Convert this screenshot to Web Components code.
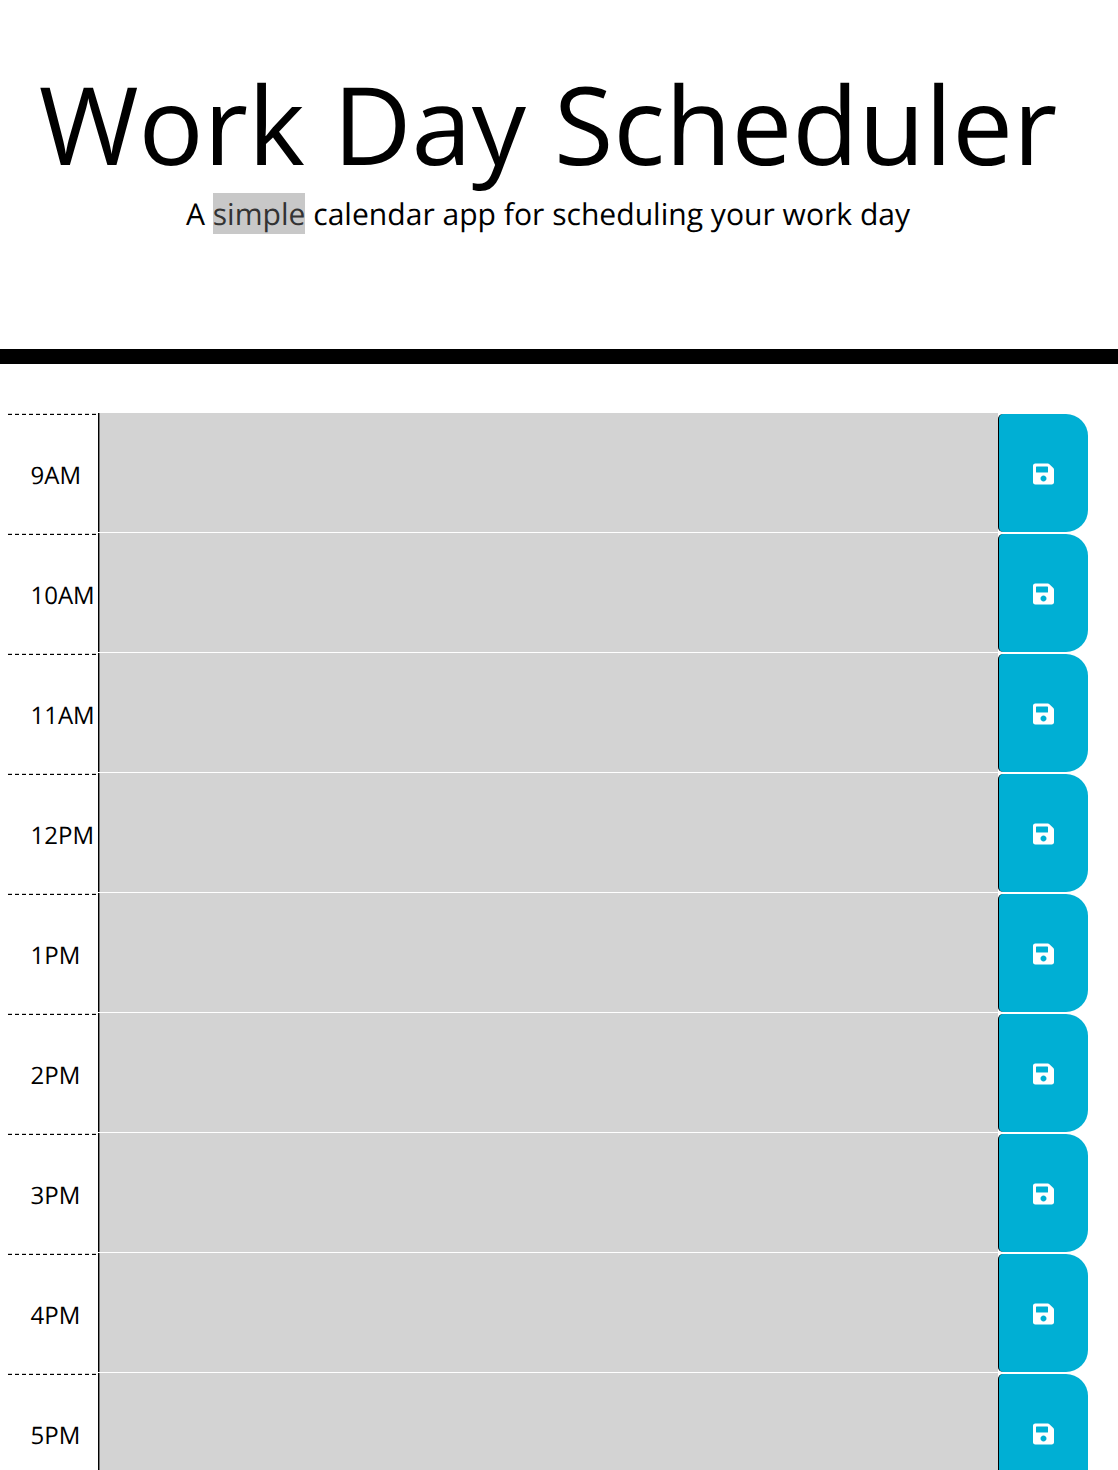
<!DOCTYPE html>
<html lang="en">
<head>
<meta charset="utf-8">
<title>Work Day Scheduler</title>
<style>
 html, body {
  margin: 0;
  height: 1470px;
  overflow: hidden;
  background: #fff;
  font-family: "Open Sans", sans-serif;
  color: #000;
  text-rendering: geometricPrecision;
 }
</style>
</head>
<body>
<scheduler-header>
 <span slot="title">Work Day Scheduler</span>
 A <scheduler-mark>simple</scheduler-mark> calendar app for scheduling your work day
</scheduler-header>
<scheduler-day>
 <hour-row>9AM</hour-row>
 <hour-row>10AM</hour-row>
 <hour-row>11AM</hour-row>
 <hour-row>12PM</hour-row>
 <hour-row>1PM</hour-row>
 <hour-row>2PM</hour-row>
 <hour-row>3PM</hour-row>
 <hour-row>4PM</hour-row>
 <hour-row>5PM</hour-row>
</scheduler-day>
<script>
 class SchedulerHeader extends HTMLElement {
  constructor() {
   super()
   this.attachShadow({ mode: "open" }).innerHTML =
    /* html */
    `<style>
    :host {
     display: block;
     height: 292px;
     border-bottom: 15px solid #000;
     padding: 57px 22px 0 0;
     text-align: center;
    }
    h1 {
     margin: 0;
     font-size: 108.25px;
     font-weight: 400;
     line-height: 132px;
     white-space: nowrap;
    }
    p {
     margin: 0;
     font-size: 30.08px;
     line-height: 50px;
    }
   </style>
   <h1><slot name="title"></slot></h1>
   <p><slot></slot></p>`
  }
 }
 customElements.define("scheduler-header", SchedulerHeader)

 class SchedulerMark extends HTMLElement {
  constructor() {
   super()
   this.attachShadow({ mode: "open" }).innerHTML =
    `<style>
    :host {
     display: inline;
     background: #c8c8c8;
     color: #333;
    }
   </style>
   <slot></slot>`
  }
 }
 customElements.define("scheduler-mark", SchedulerMark)

 class SchedulerDay extends HTMLElement {
  constructor() {
   super()
   this.attachShadow({ mode: "open" }).innerHTML =
    `<style>
    :host {
     display: block;
     padding: 49px 30px 0 8px;
    }
   </style>
   <slot></slot>`
  }
 }
 customElements.define("scheduler-day", SchedulerDay)

 class HourRow extends HTMLElement {
  constructor() {
   super()
   this.attachShadow({ mode: "open" }).innerHTML =
    `<style>
    :host {
     display: grid;
     grid-template-columns: 92px 1fr 90px;
     height: 120px;
    }
    .hour {
     display: flex;
     align-items: center;
     box-sizing: border-box;
     height: 119px;
     padding: 5px 0 0 22.5px;
     border-right: 1px solid #777;
     box-shadow: inset -1px 0 0 #000;
     background:
      repeating-linear-gradient(90deg, #000 0 4px, transparent 4px 7px) 0 1px / 100% 1px no-repeat,
      repeating-linear-gradient(90deg, #ccc 0 4px, transparent 4px 7px) 0 0 / 100% 1px no-repeat;
     font-size: 24px;
     white-space: nowrap;
    }
    .text {
     background: #d3d3d3;
     border-bottom: 1px solid #fff;
    }
    button {
     display: flex;
     align-items: center;
     justify-content: center;
     box-sizing: border-box;
     height: 118px;
     margin: 1px 0;
     padding: 2px 0 0;
     border: 0;
     border-left: 1px solid #000;
     border-radius: 5px 22px 22px 5px;
     background: #00afd4;
    }
    svg {
     display: block;
     width: 21px;
     height: 24px;
     fill: #fff;
    }
   </style>
   <div class="hour"><slot></slot></div>
   <div class="text"></div>
   <button aria-label="Save"><svg viewBox="0 0 448 512"><path d="M433.941 129.941l-83.882-83.882A48 48 0 0 0 316.118 32H48C21.49 32 0 53.49 0 80v352c0 26.51 21.49 48 48 48h352c26.51 0 48-21.49 48-48V163.882a48 48 0 0 0-14.059-33.941zM224 416c-35.346 0-64-28.654-64-64 0-35.346 28.654-64 64-64s64 28.654 64 64c0 35.346-28.654 64-64 64zm96-304.52V212c0 6.627-5.373 12-12 12H76c-6.627 0-12-5.373-12-12V108c0-6.627 5.373-12 12-12h228.52c3.183 0 6.235 1.264 8.485 3.515l3.48 3.48A12.002 12.002 0 0 1 320 111.48z"/></svg></button>`
  }
 }
 customElements.define("hour-row", HourRow)
</script>
</body>
</html>
